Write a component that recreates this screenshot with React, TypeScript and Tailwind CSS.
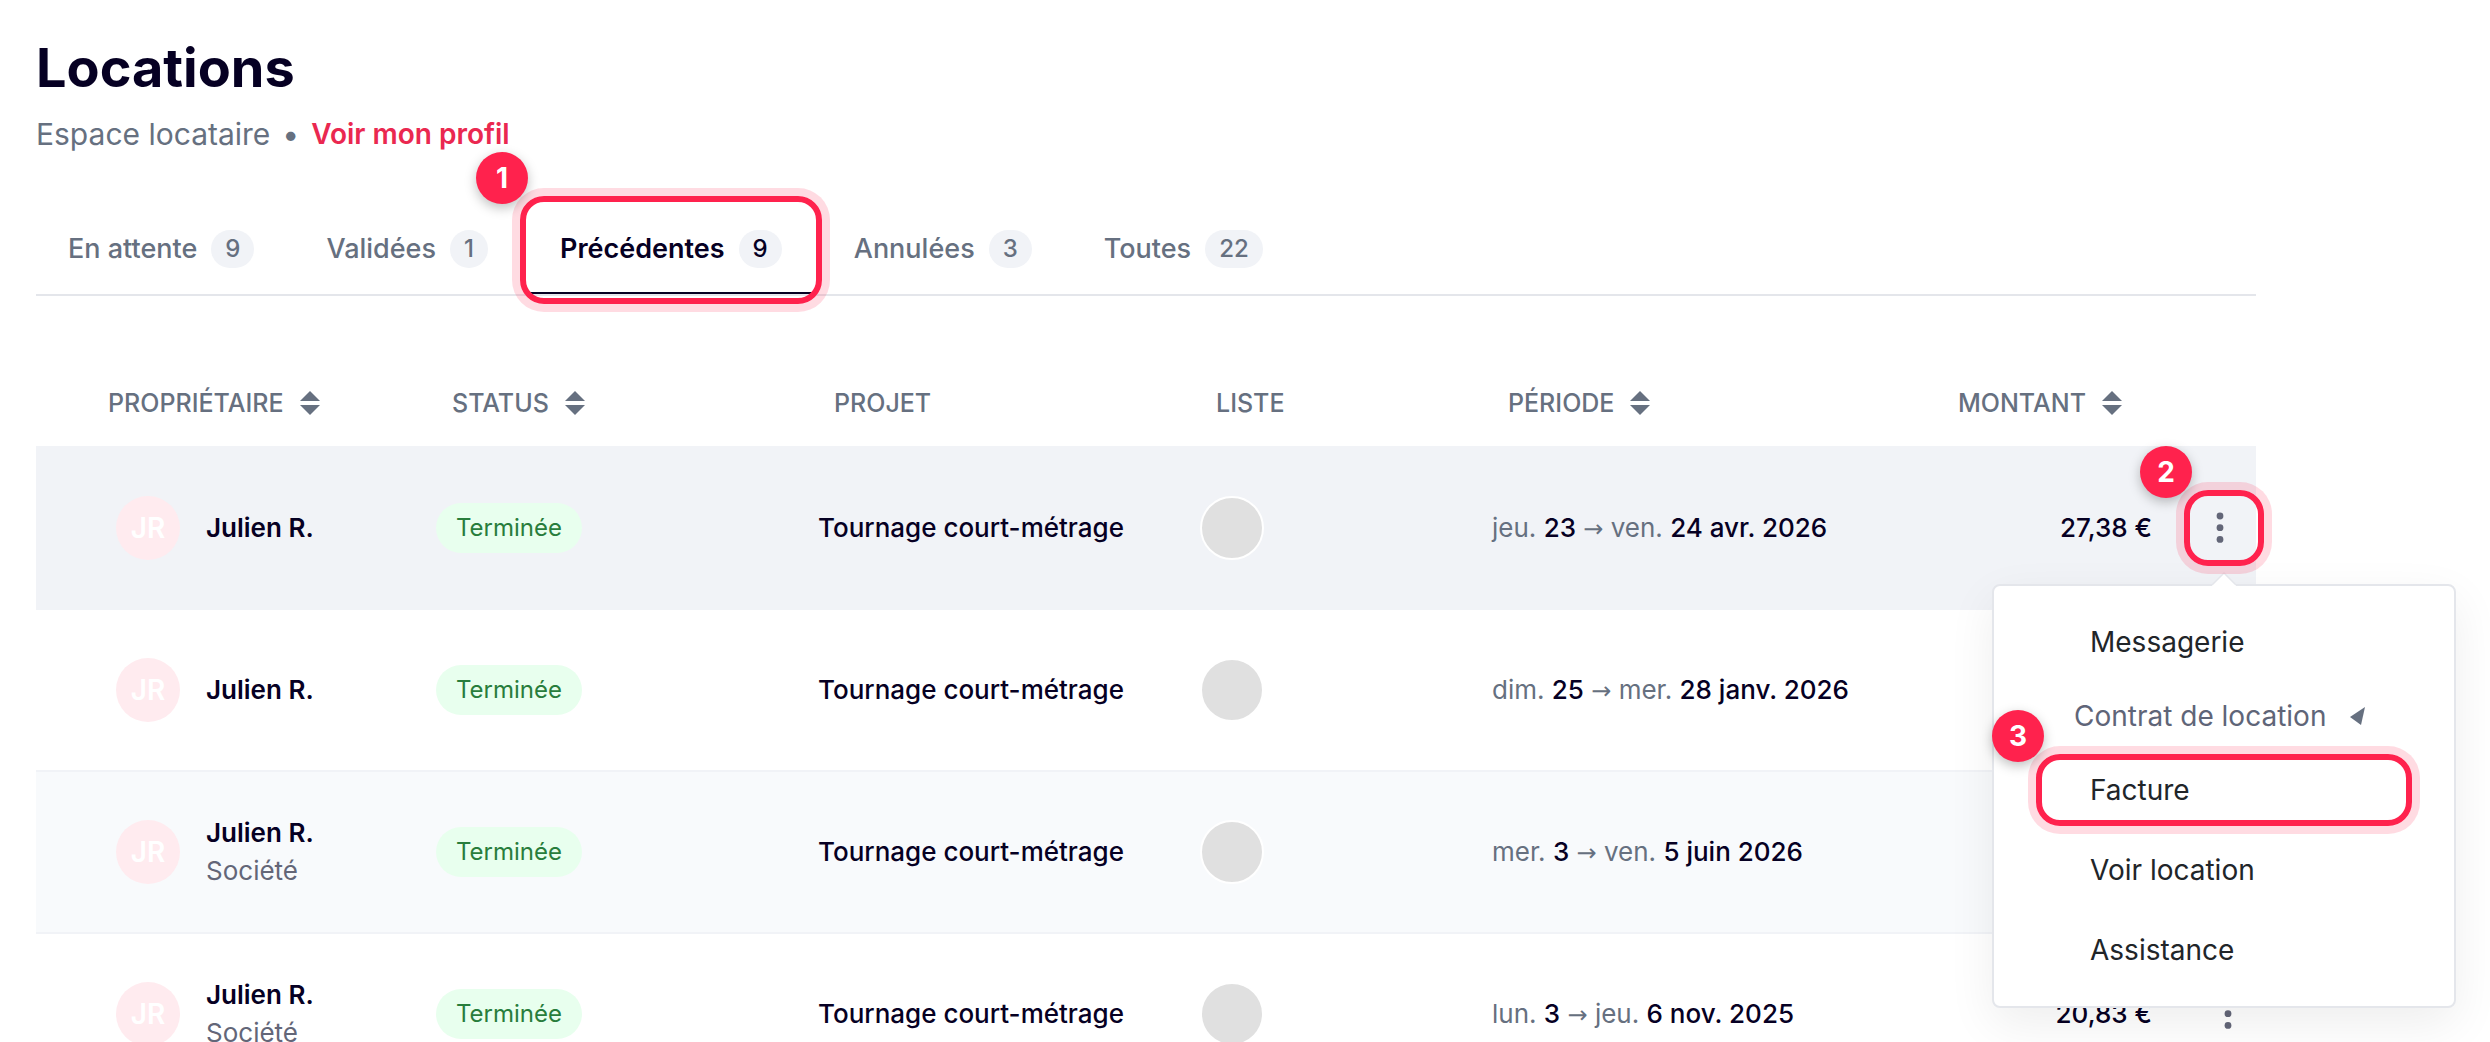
import { useState } from "react";
import clsx from "clsx";

const TABS = [
  { label: "En attente", count: 9 },
  { label: "Validées", count: 1 },
  { label: "Précédentes", count: 9 },
  { label: "Annulées", count: 3 },
  { label: "Toutes", count: 22 },
];

type Rental = {
  company?: boolean;
  from: [string, string];
  to: [string, string];
  amount?: string;
};

const RENTALS: Rental[] = [
  { from: ["jeu.", "23"], to: ["ven.", "24 avr. 2026"], amount: "27,38 €" },
  { from: ["dim.", "25"], to: ["mer.", "28 janv. 2026"] },
  { company: true, from: ["mer.", "3"], to: ["ven.", "5 juin 2026"] },
  { company: true, from: ["lun.", "3"], to: ["jeu.", "6 nov. 2025"], amount: "20,83 €" },
];

// Numbered highlight drawn around its relative parent
const Highlight = ({ step, className }: { step: number; className: string }) => (
  <span
    className={clsx(
      "pointer-events-none absolute z-20 rounded-3xl border-6 border-[#ff224d] shadow-[0_0_0_8px_rgba(255,34,77,0.16)]",
      className
    )}
  >
    <span className="absolute -left-[50px] -top-[50px] flex size-13 items-center justify-center rounded-full bg-[#ff224d] text-[28px] leading-8 font-bold text-white shadow-[0_4px_12px_rgba(0,0,0,0.25)]">
      {step}
    </span>
  </span>
);

const SortIcon = () => (
  <svg width="20" height="24" viewBox="0 0 20 24" fill="#667080" aria-hidden="true">
    <path d="M10 0L20 10H0z" />
    <path d="M10 24L0 14h20z" />
  </svg>
);

const SortButton = ({ label }: { label: string }) => (
  <button type="button" className="inline-flex items-center gap-4 font-medium uppercase">
    {label}
    <SortIcon />
  </button>
);

const DotsIcon = () => (
  <svg width="8" height="32" viewBox="0 0 8 32" fill="#636678" aria-hidden="true">
    <circle cx="4" cy="4" r="3.4" />
    <circle cx="4" cy="15.7" r="3.4" />
    <circle cx="4" cy="27.4" r="3.4" />
  </svg>
);

const RowMenu = () => (
  <div className="absolute -right-[208px] top-[86px] z-10 w-[464px] rounded-lg border-2 border-[#e4e6eb] bg-white py-4 text-left text-[28px] leading-8 text-[#212529] shadow-[0_16px_48px_rgba(0,0,0,0.07)]">
    <svg
      className="absolute -top-[14px] left-[218px]"
      width="24"
      height="15"
      viewBox="0 0 24 15"
      aria-hidden="true"
    >
      <path d="M0 15V13L12 1L24 13V15z" fill="#fff" />
      <path d="M0 13L12 1L24 13" fill="none" stroke="#e4e6eb" strokeWidth="1.5" />
    </svg>
    <ul>
      <li>
        <a href="#messagerie" className="flex h-20 items-center pl-24">Messagerie</a>
      </li>
      <li>
        <button type="button" className="flex h-17 w-full items-center gap-6 pl-20 text-[#5f6578]">
          Contrat de location
          <svg width="15" height="18" viewBox="0 0 15 18" fill="#667080" aria-hidden="true">
            <path d="M0 10L15 0L11 18z" />
          </svg>
        </button>
      </li>
      <li className="relative">
        <a href="#facture" className="flex h-20 items-center pl-24">Facture</a>
        <Highlight step={3} className="inset-x-[42px] inset-y-1" />
      </li>
      <li>
        <a href="#location" className="flex h-20 items-center pl-24">Voir location</a>
      </li>
      <li>
        <a href="#assistance" className="flex h-20 items-center pl-24">Assistance</a>
      </li>
    </ul>
  </div>
);

const RentalRow = ({ rental, open, striped }: { rental: Rental; open: boolean; striped: boolean }) => (
  <tr
    className={clsx(
      "[&>td]:h-[162px] [&>td]:border-b-2 [&>td]:border-[#f1f3f7] [&>td]:px-4",
      open ? "bg-[#f1f3f7]" : striped && "bg-[#f8fafc]"
    )}
  >
    <td>
      <div className="flex items-center gap-[26px] pl-16">
        <span className="flex size-16 items-center justify-center rounded-full bg-[#ffebef] text-[28px] leading-8 font-semibold text-white">
          JR
        </span>
        <div className="leading-[38px]">
          <div className="font-semibold">Julien R.</div>
          {rental.company && <div className="text-[#636678]">Société</div>}
        </div>
      </div>
    </td>
    <td>
      <span className="inline-flex h-[50px] items-center rounded-full bg-[#e8ffee] px-5 text-[24px] leading-8 text-[#287d3c]">
        Terminée
      </span>
    </td>
    <td className="font-medium">Tournage court-métrage</td>
    <td>
      <div className="size-16 rounded-full border-2 border-white bg-[#e0e0e0]" />
    </td>
    <td className="whitespace-nowrap text-[#667080]">
      {rental.from[0]} <span className="font-medium text-[#060023]">{rental.from[1]}</span>{" "}
      <span className="font-['DejaVu_Sans',sans-serif] text-[24px] leading-none">→</span>{" "}
      {rental.to[0]} <span className="font-medium text-[#060023]">{rental.to[1]}</span>
    </td>
    <td className="text-right font-medium">{rental.amount}</td>
    <td className="!px-0">
      <div className={clsx("relative ml-auto h-15 w-14", open && "mr-2")}>
        <button
          type="button"
          aria-label="Actions"
          aria-expanded={open}
          className="flex size-full items-center justify-center"
        >
          <DotsIcon />
        </button>
        {open && (
          <>
            <Highlight step={2} className="-inset-y-2 -left-2 -right-4" />
            <RowMenu />
          </>
        )}
      </div>
    </td>
  </tr>
);

const App = () => {
  const [activeTab, setActiveTab] = useState("Précédentes");

  return (
    <main className="h-screen overflow-hidden bg-white pl-9 pr-[234px] pt-9 font-['Inter',sans-serif] text-[26px] leading-10 text-[#060023]">
      <h1 className="text-[54px] leading-16 font-bold">Locations</h1>
      <p className="mt-3.5 flex gap-3 text-[30px] text-[#667080]">
        <span>Espace locataire</span>
        <span>•</span>
        <a href="#profil" className="text-[28px] font-semibold text-[#ea2850]">
          Voir mon profil
        </a>
      </p>

      {/* Onglets */}
      <nav className="mt-12.5 flex gap-2 border-b-2 border-[#e4e6eb]">
        {TABS.map((tab) => (
          <button
            key={tab.label}
            type="button"
            onClick={() => setActiveTab(tab.label)}
            className={clsx(
              "relative flex h-[90px] items-center gap-[14px] border-y-2 border-t-transparent px-8 text-[27px]",
              tab.label === activeTab
                ? "border-b-[#060023] font-semibold"
                : "border-b-transparent font-medium text-[#667080]"
            )}
          >
            {tab.label}
            <span className="rounded-full bg-[#f1f3f7] px-[14px] text-[24px] leading-[38px] font-medium">
              {tab.count}
            </span>
            {tab.label === activeTab && (
              <Highlight step={1} className="-inset-x-2 -bottom-3 -top-[10px]" />
            )}
          </button>
        ))}
      </nav>

      {/* Liste des locations */}
      <table className="mt-16 w-full table-fixed border-separate border-spacing-0">
        <colgroup>
          <col className="w-[384px]" />
          <col className="w-[382px]" />
          <col className="w-[382px]" />
          <col className="w-[292px]" />
          <col />
          <col className="w-[280px]" />
          <col className="w-[88px]" />
        </colgroup>
        <thead>
          <tr className="text-left text-[25px] text-[#667080] uppercase [&>th]:h-[88px] [&>th]:border-b-2 [&>th]:border-[#f1f3f7] [&>th]:px-8 [&>th]:font-medium">
            <th>
              <div className="pl-10">
                <SortButton label="Propriétaire" />
              </div>
            </th>
            <th>
              <SortButton label="Status" />
            </th>
            <th>Projet</th>
            <th>Liste</th>
            <th>
              <SortButton label="Période" />
            </th>
            <th className="text-right">
              <div className="pr-3.5">
                <SortButton label="Montant" />
              </div>
            </th>
            <th aria-label="Actions" />
          </tr>
        </thead>
        <tbody>
          {RENTALS.map((rental, i) => (
            <RentalRow key={i} rental={rental} open={i === 0} striped={i % 2 === 0} />
          ))}
        </tbody>
      </table>
    </main>
  );
};

export default App;
